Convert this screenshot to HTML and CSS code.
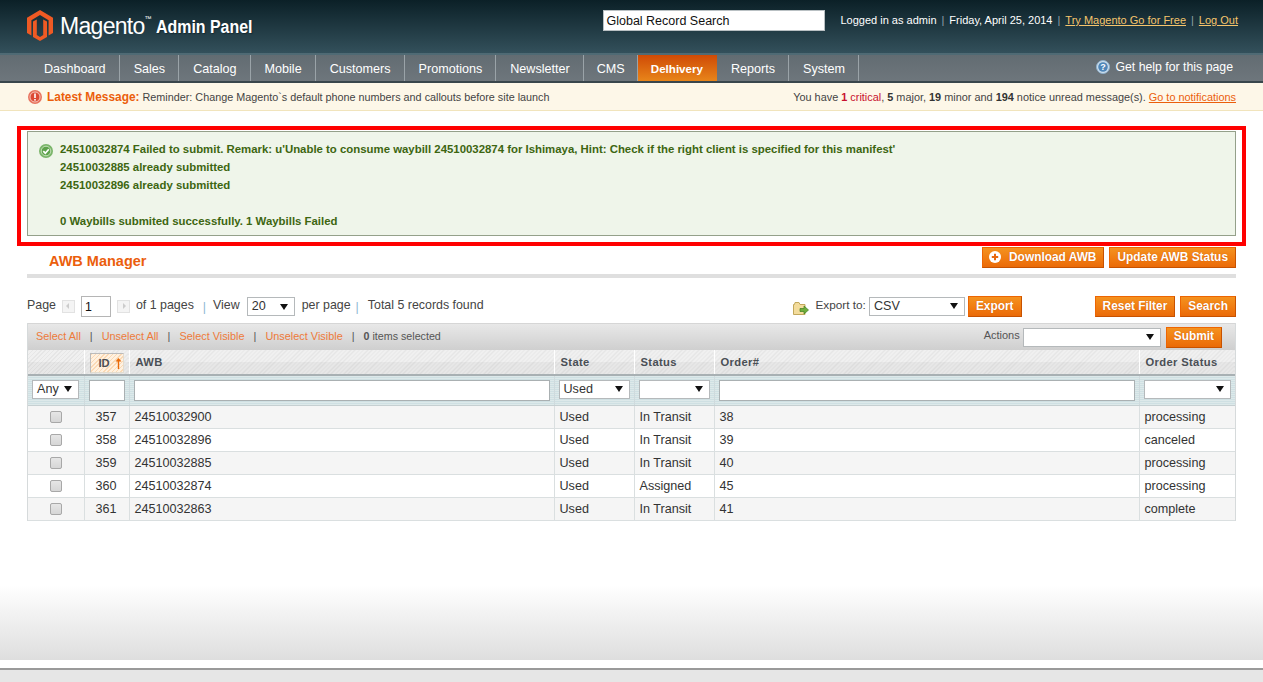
FILE: index.html
```html
<!DOCTYPE html>
<html lang="en">
<head>
<meta charset="utf-8">
<title>AWB Manager / Magento Admin</title>
<link rel="stylesheet" href="styles.css">
</head>
<body>
<header class="top">
  <div class="brand">
    <svg class="logo" viewBox="0 0 26 31" width="26" height="31"><path fill="#ef5a24" d="M13 0 26 7.700V23L21.600 25.600V10.200L13 5 4.400 10.200V25.600L0 23V7.700Z"/><path fill="#ef5a24" d="M13 31 6 27V11.500L9.800 9.400V25L13 27 16.200 25V9.400L20 11.500V27Z"/></svg>
    <span class="brand-name">Magento<sup class="tm">™</sup></span>
    <span class="brand-sub">Admin Panel</span>
  </div>
  <div class="top-right">
    <input class="global-search" type="text" value="Global Record Search">
    <div class="user-line">
      <span>Logged in as admin</span><i>|</i><span>Friday, April 25, 2014</span><i>|</i><a href="#">Try Magento Go for Free</a><i>|</i><a href="#">Log Out</a>
    </div>
  </div>
</header>
<nav class="nav">
  <ul class="nav-list">
    <li>Dashboard</li><li>Sales</li><li>Catalog</li><li>Mobile</li><li>Customers</li><li>Promotions</li><li>Newsletter</li><li>CMS</li><li class="active">Delhivery</li><li>Reports</li><li>System</li>
  </ul>
  <a class="help" href="#"><svg viewBox="0 0 14 14" width="14" height="14"><circle cx="7" cy="7" r="6.500" fill="#cfe0ee" stroke="#8fb0cc"/><circle cx="7" cy="7" r="4.800" fill="#4f86b8"/><text x="7" y="10.300" class="help-q">?</text></svg>Get help for this page</a>
</nav>
<div class="notice">
  <div class="notice-left"><svg viewBox="0 0 14 14" width="14" height="14"><circle cx="7" cy="7" r="7" fill="#e8735f"/><circle cx="7" cy="7" r="5" fill="#dc4a35" stroke="#f6c4b8"/><rect x="6.200" y="3.500" width="1.600" height="4.500" fill="#fff"/><rect x="6.200" y="9" width="1.600" height="1.600" fill="#fff"/></svg><strong>Latest Message:</strong> Reminder: Change Magento`s default phone numbers and callouts before site launch</div>
  <div class="notice-right">You have <b class="crit">1</b> <span class="crit">critical</span>, <b>5</b> major, <b>19</b> minor and <b>194</b> notice unread message(s). <a href="#">Go to notifications</a></div>
</div>
<main class="content">
  <div class="highlight">
    <div class="msg">
      <svg class="msg-icon" viewBox="0 0 14 14" width="14" height="14"><circle cx="7" cy="7" r="7" fill="#7ab56a"/><circle cx="7" cy="7" r="4.800" fill="#5da24b" stroke="#c3e0b8"/><path d="M4.300 7.200 6.300 9.200 9.800 5.200" fill="none" stroke="#fff" stroke-width="1.700"/></svg>
      <div class="msg-text">
        <p>24510032874 Failed to submit. Remark: u'Unable to consume waybill 24510032874 for Ishimaya, Hint: Check if the right client is specified for this manifest'</p>
        <p>24510032885 already submitted</p>
        <p>24510032896 already submitted</p>
        <p>&nbsp;</p>
        <p>0 Waybills submited successfully. 1 Waybills Failed</p>
      </div>
    </div>
  </div>
  <div class="page-head">
    <h1>AWB Manager</h1>
    <div class="head-btns">
      <button class="btn btn-add" type="button"><svg viewBox="0 0 12 12" width="12" height="12"><circle cx="6" cy="6" r="6" fill="#fff"/><path d="M6 2.800V9.200M2.800 6H9.200" stroke="#e8690f" stroke-width="2"/></svg>Download AWB</button>
      <button class="btn" type="button">Update AWB Status</button>
    </div>
  </div>
  <div class="toolbar">
    <div class="pager">
      <span>Page</span>
      <span class="page-arrow"></span>
      <span class="page-num">1</span>
      <span class="page-arrow page-arrow-next"></span>
      <span>of 1 pages</span><i>|</i>
      <span>View</span>
      <span class="sel sel-view">20</span>
      <span>per page</span><i class="tight">|</i>
      <span>Total 5 records found</span>
    </div>
    <div class="export">
      <svg class="export-icon" viewBox="0 0 16 14" width="16" height="14"><path d="M.5 3.500V13.500H12V3.500H7L6 1.500H2L1.500 3.500Z" fill="#f3dc9c" stroke="#c2a85c"/><path d="M7 7.500H11V5L15.500 9 11 13V10.500H7Z" fill="#6fae3c" stroke="#3f7f1e" stroke-width=".7"/></svg>
      <span class="export-label">Export to:</span>
      <span class="sel sel-export">CSV</span>
      <button class="btn" type="button">Export</button>
    </div>
    <div class="filter-btns">
      <button class="btn" type="button">Reset Filter</button>
      <button class="btn" type="button">Search</button>
    </div>
  </div>
  <div class="grid">
    <div class="mass">
      <div class="mass-links"><a href="#">Select All</a><i>|</i><a href="#">Unselect All</a><i>|</i><a href="#">Select Visible</a><i>|</i><a href="#">Unselect Visible</a><i>|</i><span class="mass-count"><b>0</b> items selected</span></div>
      <div class="mass-actions"><span class="actions-label">Actions</span><span class="sel sel-actions"></span><button class="btn" type="button">Submit</button></div>
    </div>
    <table class="data">
      <colgroup><col class="c-check"><col class="c-id"><col class="c-awb"><col class="c-state"><col class="c-status"><col class="c-order"><col class="c-ostatus"></colgroup>
      <thead>
        <tr class="head">
          <th></th><th class="th-id"><span class="sort">ID<svg class="sort-arrow" viewBox="0 0 7 11" width="7" height="11"><path d="M3.500 0 6.500 3.500H4.200V11H2.800V3.500H.5Z" fill="#ea6a08"/></svg></span></th><th>AWB</th><th>State</th><th>Status</th><th>Order#</th><th>Order Status</th>
        </tr>
        <tr class="filter">
          <th><span class="sel sel-any">Any</span></th>
          <th><span class="field"></span></th>
          <th><span class="field"></span></th>
          <th><span class="sel">Used</span></th>
          <th><span class="sel"></span></th>
          <th><span class="field"></span></th>
          <th><span class="sel"></span></th>
        </tr>
      </thead>
      <tbody>
        <tr class="odd"><td class="ck"><span class="check"></span></td><td class="num">357</td><td>24510032900</td><td>Used</td><td>In Transit</td><td>38</td><td>processing</td></tr>
        <tr><td class="ck"><span class="check"></span></td><td class="num">358</td><td>24510032896</td><td>Used</td><td>In Transit</td><td>39</td><td>canceled</td></tr>
        <tr class="odd"><td class="ck"><span class="check"></span></td><td class="num">359</td><td>24510032885</td><td>Used</td><td>In Transit</td><td>40</td><td>processing</td></tr>
        <tr><td class="ck"><span class="check"></span></td><td class="num">360</td><td>24510032874</td><td>Used</td><td>Assigned</td><td>45</td><td>processing</td></tr>
        <tr class="odd"><td class="ck"><span class="check"></span></td><td class="num">361</td><td>24510032863</td><td>Used</td><td>In Transit</td><td>41</td><td>complete</td></tr>
      </tbody>
    </table>
  </div>
</main>
<div class="bottom-fade"></div>
<footer class="footer"></footer>
</body>
</html>
```
FILE: styles.css
```css
* { box-sizing: border-box; }
html, body { height: 682px; overflow: hidden; }
body { margin: 0; background: #fff; font-family: "Liberation Sans", Arial, sans-serif; font-size: 12.600px; color: #2f2f2f; }
a { color: inherit; }
i { font-style: normal; }
p { margin: 0; }

.top { height: 53px; padding: 0 25px 0 27px; display: flex; justify-content: space-between; background: linear-gradient(#0b2027, #33505b); }
.brand { display: flex; align-items: flex-start; color: #fff; }
.logo { margin-top: 10px; flex: none; }
.brand-name { margin: 12px 0 0 7px; font-size: 23px; line-height: 28px; letter-spacing: -.7px; }
.tm { font-size: 7px; vertical-align: 13px; line-height: 0; }
.brand-sub { margin: 17px 0 0 5px; font-size: 17.500px; line-height: 20px; font-weight: bold; transform: scaleX(.91); transform-origin: left; text-shadow: 1px 1px 1px #142a32; white-space: nowrap; }
.top-right { display: flex; align-items: flex-start; padding-top: 10px; }
.global-search { width: 222px; height: 21px; padding: 0 2px; border: 1px solid #b9c0c3; background: #fff; font: 12.500px "Liberation Sans", Arial, sans-serif; color: #111; }
.user-line { margin: 4px 0 0 15px; color: #fff; font-size: 11px; line-height: 13px; white-space: nowrap; }
.user-line i { margin: 0 5px; color: #8fa2a9; }
.user-line a { color: #f6c56c; }

.nav { height: 30px; border-top: 2px solid #4f6a74; border-bottom: 2px solid #39464c; padding-left: 30px; display: flex; justify-content: space-between; background: linear-gradient(#626c72, #6e767c); }
.nav-list { display: flex; margin: 0; padding: 0; list-style: none; }
.nav-list li { padding: 1px 13px 0 14px; color: #fff; line-height: 26px; border-right: 1px solid #9aa3a8; white-space: nowrap; }
.nav-list li:nth-child(8) { padding: 1px 12px 0 13px; }
.nav-list .active { padding: 1px 14px 0 13px; border-right: 0; font-weight: bold; font-size: 11.600px; background: linear-gradient(#cf4a06, #e8851a); }
.help { display: flex; align-items: center; gap: 5px; padding: 0 30px 3px 0; color: #fff; text-decoration: none; font-size: 12.300px; }
.help-q { font-size: 9px; font-weight: bold; fill: #fff; text-anchor: middle; }

.notice { height: 28px; padding: 1px 27px 0 28px; display: flex; justify-content: space-between; align-items: center; border-bottom: 1px solid #f1e4bc; background: #fdf7e8; font-size: 10.800px; color: #444; white-space: nowrap; }
.notice-left { display: flex; align-items: center; white-space: pre; }
.notice-left strong { margin-left: 5px; color: #eb5e0c; font-size: 11.900px; }
.notice-right { font-size: 10.900px; }
.notice-right b { color: #333; }
.notice-right .crit { color: #c8102e; }
.notice-right a { color: #eb5e0c; }

.content { padding: 15px 27px 0 27px; }
.highlight { margin: 0 -10px; border: 4px solid #f00; padding: 1px 6px 6px; }
.msg { height: 105px; display: flex; border: 1px solid #94a08a; background: #eff5ea; padding: 8px 11px; }
.msg-icon { flex: none; margin-top: 4px; }
.msg-text { margin-left: 7px; color: #3d6611; font-size: 11.400px; font-weight: bold; line-height: 18px; white-space: nowrap; }

.page-head { height: 31px; margin-top: 1px; display: flex; justify-content: space-between; align-items: flex-start; border-bottom: 4px solid #dfdfdf; padding-left: 22px; }
.page-head h1 { margin: 6px 0 0; font-size: 14.500px; line-height: 17px; color: #eb5e0c; }
.head-btns { display: flex; gap: 5px; }
.btn { height: 21px; padding: 0 7px 2px; display: inline-flex; align-items: center; gap: 8px; border: 1px solid #ed6502; border-bottom-color: #c75200; border-right-color: #c75200; background: linear-gradient(#f4921f, #f07a10 60%, #ea6a08); color: #fff; font: bold 11.900px "Liberation Sans", Arial, sans-serif; white-space: nowrap; text-shadow: 0 0 1px #c75200; }
.btn-add { padding-left: 6px; }

.toolbar { height: 45px; padding-top: 18px; display: flex; align-items: flex-start; }
.pager { display: flex; align-items: center; height: 21px; padding-bottom: 3px; font-size: 12.400px; color: #444; white-space: nowrap; }
.pager i { margin: 3px 7px 0 9px; color: #8cb8d4; }
.pager .tight { margin: 3px 9px 0 5px; }
.page-arrow { width: 13px; height: 13px; margin: 2px 6px 0 6px; border: 1px solid #e2e2e2; background: #f4f4f4; position: relative; }
.page-arrow::after { content: ""; position: absolute; left: 3px; top: 2.500px; border: 3px solid transparent; border-right-color: #ccc; border-left: 0; }
.page-arrow-next { margin: 2px 6px 0 6px; }
.page-arrow-next::after { left: 5px; border-right: 0; border-left: 3px solid #ccc; }
.page-num { width: 30px; height: 21px; padding: 3px 3px; border: 1px solid #b5b5b5; color: #111; margin-top: 3px; }
.sel { display: flex; align-items: center; width: 100%; height: 20px; padding: 0 0 2px 4px; border: 1px solid #b5b9bb; background: #fff; color: #333; font-weight: normal; font-size: 12.600px; position: relative; }
.sel::after { content: ""; position: absolute; right: 6px; top: 6px; border: 4px solid transparent; border-top: 6px solid #111; border-bottom: 0; }
.sel-view { width: 48px; margin: 3px 7px 0 7px; height: 19px; }
.export { margin-left: auto; margin-right: 73px; display: flex; align-items: center; gap: 3px; height: 21px; color: #444; font-size: 11.800px; white-space: nowrap; }
.export-icon { margin-right: 3px; margin-top: 3px; }
.export-label { margin-bottom: 3px; }
.sel-export { width: 96px; height: 19px; }
.sel-export::after { top: 5px; }
.filter-btns { display: flex; gap: 5px; }

.grid { border: 1px solid #d6dadb; border-top: 0; border-bottom: 0; }
.mass { height: 27px; padding: 0 13px 0 8px; display: flex; justify-content: space-between; align-items: center; border-top: 1px solid #d6d6d6; background: linear-gradient(#e8e8e8, #cfcfcf); font-size: 10.900px; color: #555; white-space: nowrap; }
.mass-links { padding-bottom: 2px; }
.mass-links a { color: #ee7a3a; text-decoration: none; }
.mass-links i { margin: 0 9px; color: #555; }
.mass-count { font-size: 10.700px; }
.mass-actions { display: flex; align-items: center; gap: 3px; font-size: 11px; }
.actions-label { margin-bottom: 4px; }
.sel-actions { width: 138px; height: 19px; }
.sel-actions::after { top: 5px; }
.mass-actions .btn { margin-left: 2px; height: 21px; }

.data { width: 100%; table-layout: fixed; border-collapse: collapse; }
.c-check { width: 56px; }
.c-id { width: 45px; }
.c-awb { width: 425px; }
.c-state, .c-status { width: 80px; }
.c-order { width: 425px; }
.head th { height: 25px; padding: 0 0 1px 6px; border-right: 1px solid #fff; border-bottom: 2px solid #a8b0b3; background: linear-gradient(rgba(0,0,0,0) 50%, rgba(0,0,0,.04) 50%), repeating-linear-gradient(135deg, #e6e6e6 0 1px, #f0f0f0 1px 3px); text-align: left; font-size: 11.200px; font-weight: bold; letter-spacing: .35px; color: #4a4f55; }
.head th:last-child { border-right: 0; }
.head .th-id { padding: 2px 5px 0 5px; }
.sort { display: flex; align-items: center; gap: 5px; height: 20px; padding: 0 0 0 8px; border: 1px solid #e3dccf; border-left-color: #bbb; border-top-color: #bbb; background: repeating-linear-gradient(135deg, #fad9b4 0 1px, #fff1e0 1px 3px); letter-spacing: 0; }
.filter th { height: 30px; padding: 4px 4px 0 4px; vertical-align: top; border-right: 1px solid #cfdadd; border-bottom: 1px solid #c6d0d2; background: repeating-linear-gradient(#dde9ea 0 1px, #cfe0e3 1px 2px); }
.filter th:last-child { border-right: 0; }
.field { display: block; height: 21px; border: 1px solid #aab0b2; background: #fff; }
.filter .sel { height: 19px; }
.filter .sel::after { top: 5px; }
.sel-any { width: 47px; }
.data td { height: 23px; padding: 0 4px 0 5px; border-right: 1px solid #dadfe0; border-bottom: 1px solid #dadfe0; color: #333; font-size: 12.600px; white-space: nowrap; }
.data td:last-child { border-right: 0; }
.data .num { text-align: right; padding-right: 12px; }
.data .ck { padding: 0; text-align: center; }
.data .odd td { background: #f5f5f5; }
.check { display: block; width: 12px; height: 12px; margin: 1px auto 0; border: 1px solid #a8a8a8; border-radius: 2px; background: linear-gradient(#e6e6e6, #d6d6d6); }

.bottom-fade { height: 75px; margin-top: 64px; background: linear-gradient(#fff, #dedede); }
.footer { height: 14px; margin-top: 8px; border-top: 2px solid #9a9a9a; background: #e6e6e6; }
```
